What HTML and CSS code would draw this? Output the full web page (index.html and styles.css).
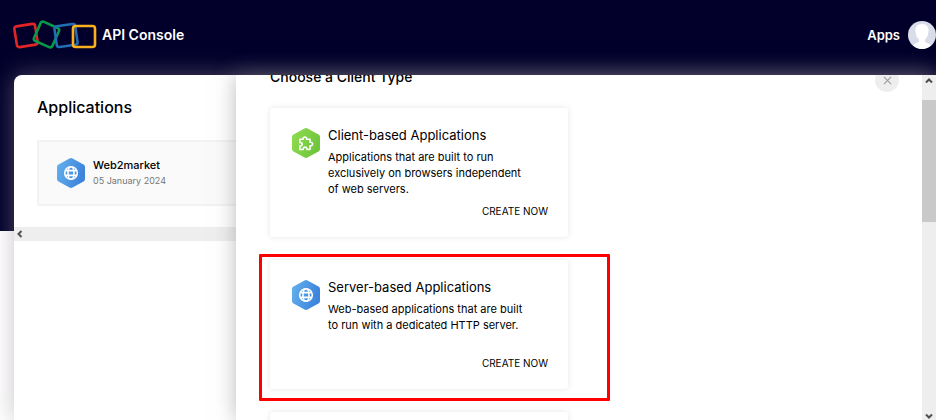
FILE: index.html
```html
<!DOCTYPE html>
<html lang="en">
<head>
  <meta charset="UTF-8">
  <meta name="viewport" content="width=device-width, initial-scale=1.0">
  <title>API Console</title>
  <link rel="stylesheet" href="styles.css">
</head>
<body>
  <svg class="icon-defs" aria-hidden="true">
    <defs>
      <linearGradient id="blueFill" x1="0" y1="0" x2="1" y2="0.3">
        <stop offset="0" stop-color="#64b2ec"/>
        <stop offset="1" stop-color="#3d84dc"/>
      </linearGradient>
      <linearGradient id="greenFill" x1="0" y1="0" x2="1" y2="0.4">
        <stop offset="0" stop-color="#92dc50"/>
        <stop offset="1" stop-color="#6fc63c"/>
      </linearGradient>
      <symbol id="globeIcon" viewBox="0 0 28 32">
        <path d="M12.5 1.4Q14 .6 15.5 1.4L26.5 7.4Q28 8.3 28 10V22Q28 23.7 26.5 24.6L15.5 30.6Q14 31.4 12.5 30.6L1.5 24.6Q0 23.7 0 22V10Q0 8.3 1.5 7.4Z" fill="url(#blueFill)"/>
        <g fill="none" stroke="#fff" stroke-width="1.6">
          <circle cx="14" cy="16" r="6.3"/>
          <ellipse cx="14" cy="16" rx="3" ry="6.3"/>
          <path d="M8.5 13.6H19.5M8.5 18.4H19.5"/>
        </g>
      </symbol>
      <symbol id="puzzleIcon" viewBox="0 0 28 32">
        <path d="M12.5 1.4Q14 .6 15.5 1.4L26.5 7.4Q28 8.3 28 10V22Q28 23.7 26.5 24.6L15.5 30.6Q14 31.4 12.5 30.6L1.5 24.6Q0 23.7 0 22V10Q0 8.3 1.5 7.4Z" fill="url(#greenFill)"/>
        <path d="M7.8 12.3H11.2C10.4 9.3 15.2 9.3 14.6 12.3H18V15.3C21.4 14.5 21.4 19.5 18 18.8V22.5H15C15.4 19.3 10.8 19.3 11.2 22.5H7.8V19C11 19.6 11 15 7.8 15.6Z" fill="none" stroke="#fff" stroke-width="1.6" stroke-linejoin="round"/>
      </symbol>
    </defs>
  </svg>

  <header class="header">
    <a href="#" class="brand">
      <svg class="logo" viewBox="0 0 84 30" fill="none" stroke-width="2.6" aria-hidden="true">
        <rect x="2.500" y="5" width="21" height="21" rx="2.500" stroke="#e42527" transform="rotate(-9 13 15.500)"/>
        <rect x="23.500" y="4" width="20" height="21" rx="2.500" stroke="#089949" transform="rotate(24 33.500 14.500)"/>
        <rect x="42.500" y="5" width="21" height="21" rx="2.500" stroke="#226db4" transform="rotate(-8 53 15.500)"/>
        <rect x="60" y="6" width="22" height="21" rx="2.500" stroke="#f9b21d"/>
      </svg>
      <span class="brand-name">API Console</span>
    </a>
    <nav class="header-nav">
      <a href="#" class="nav-link">Apps</a>
      <button type="button" class="avatar" aria-label="Profile">
        <svg viewBox="0 0 28 28" aria-hidden="true">
          <circle cx="14" cy="14" r="14" fill="#d9dde9"/>
          <path d="M14 3C9.3 3 7 6.3 7.5 10.5C7.8 14.5 9.3 17.3 11 18.5V20.5C9.5 22 7 22.3 5 24.2Q9 28 14 28T23 24.2C21 22.3 18.5 22 17 20.5V18.5C18.7 17.3 20.2 14.5 20.5 10.5C21 6.3 18.7 3 14 3Z" fill="#fff"/>
        </svg>
      </button>
    </nav>
  </header>

  <div class="workspace">
    <section class="app-list">
      <h1>Applications</h1>
      <a href="#" class="app-item">
        <svg class="hex-icon" aria-hidden="true"><use href="#globeIcon"/></svg>
        <span class="app-info">
          <span class="app-name">Web2market</span>
          <span class="app-date">05 January 2024</span>
        </span>
      </a>
      <div class="scrollbar-x">
        <svg class="arrow" viewBox="0 0 8 8" aria-hidden="true"><path d="M5.5 1L2.5 4L5.5 7"/></svg>
      </div>
    </section>

    <main class="panel">
      <div class="panel-body">
        <div class="client-types">
          <h2>Choose a Client Type</h2>

          <article class="card">
            <svg class="hex-icon" aria-hidden="true"><use href="#puzzleIcon"/></svg>
            <div class="card-body">
              <h3>Client-based Applications</h3>
              <p>Applications that are built to run exclusively on browsers independent of web servers.</p>
              <button type="button" class="btn-create">CREATE NOW</button>
            </div>
          </article>

          <article class="card card-marked">
            <svg class="hex-icon" aria-hidden="true"><use href="#globeIcon"/></svg>
            <div class="card-body">
              <h3>Server-based Applications</h3>
              <p>Web-based applications that are built to run with a dedicated HTTP server.</p>
              <button type="button" class="btn-create">CREATE NOW</button>
            </div>
          </article>

          <article class="card"></article>
        </div>
        <button type="button" class="btn-close" aria-label="Close">
          <svg viewBox="0 0 10 10" aria-hidden="true"><path d="M1 1L9 9M9 1L1 9"/></svg>
        </button>
      </div>
      <div class="scrollbar-y">
        <svg class="arrow" viewBox="0 0 8 8" aria-hidden="true"><path d="M1 5.5L4 2.5L7 5.5"/></svg>
        <div class="thumb"></div>
        <svg class="arrow arrow-down" viewBox="0 0 8 8" aria-hidden="true"><path d="M1 2.5L4 5.5L7 2.5"/></svg>
      </div>
    </main>
  </div>
</body>
</html>
```

FILE: styles.css
```css
* {
  margin: 0;
  padding: 0;
  box-sizing: border-box;
}

body {
  font-family: Inter, "Liberation Sans", sans-serif;
  font-size: 11px;
  color: #000;
  background: linear-gradient(#02002b 231px, #fff 231px);
  height: 100vh;
  display: flex;
  flex-direction: column;
  overflow: hidden;
}

a {
  color: inherit;
  text-decoration: none;
}

button {
  font: inherit;
  color: inherit;
  background: none;
  border: none;
  cursor: pointer;
}

.icon-defs {
  position: absolute;
  width: 0;
  height: 0;
}

.header {
  height: 75px;
  flex: none;
  display: flex;
  align-items: center;
  justify-content: space-between;
  padding: 0 0 6px 13px;
  color: #fff;
}

.brand {
  display: flex;
  align-items: center;
  gap: 5px;
}

.logo {
  width: 84px;
  height: 30px;
}

.brand-name {
  font-size: 14px;
  font-weight: 600;
}

.nav-link {
  font-size: 13px;
  font-weight: 600;
}

.header-nav {
  display: flex;
  align-items: center;
  gap: 8px;
}

.avatar,
.avatar svg {
  display: block;
  width: 28px;
  height: 28px;
}

.workspace {
  flex: 1;
  min-height: 0;
  display: grid;
  grid-template-columns: 222px 1fr;
  margin-left: 14px;
  background: #fff;
  border-radius: 8px 0 0 0;
  box-shadow: 0 0 24px rgba(150, 140, 150, 0.5);
}

.app-list {
  padding-top: 22px;
  overflow: hidden;
}

.app-list h1 {
  font-size: 16px;
  font-weight: 500;
  line-height: 20px;
  margin: 0 0 23px 23px;
}

.app-item {
  display: flex;
  align-items: center;
  gap: 8px;
  height: 66px;
  margin-left: 23px;
  padding-left: 18px;
  background: #fafafa;
  border: 2px solid #f2f2f2;
  border-right: none;
  border-radius: 2px 0 0 2px;
}

.hex-icon {
  width: 28px;
  height: 32px;
  flex: none;
}

.app-info {
  display: flex;
  flex-direction: column;
}

.app-name {
  font-weight: 500;
  line-height: 16px;
}

.app-date {
  font-size: 9px;
  line-height: 16px;
  color: #777;
}

.scrollbar-x {
  display: flex;
  align-items: center;
  height: 14px;
  margin-top: 21px;
  padding-left: 2px;
  background: #eee;
}

.arrow {
  width: 8px;
  height: 8px;
  fill: none;
  stroke: #505050;
  stroke-width: 2;
}

.panel {
  display: flex;
  min-width: 0;
  min-height: 0;
  background: #fff;
  box-shadow: 0 0 20px rgba(120, 120, 120, 0.5);
}

.panel-body {
  flex: 1;
  display: flex;
  align-items: flex-start;
  justify-content: space-between;
  padding: 0 23px 0 34px;
  overflow: hidden;
}

/* scrolled a little past the heading */
.client-types {
  width: 298px;
  margin-top: -8px;
}

.client-types h2 {
  font-size: 14px;
  font-weight: 500;
  line-height: 20px;
  margin-bottom: 21px;
}

.card {
  position: relative;
  display: flex;
  gap: 8px;
  height: 129px;
  margin-bottom: 23px;
  padding: 19px 20px 18px 22px;
  border-radius: 3px;
  box-shadow: 0 0 6px rgba(0, 0, 0, 0.1);
}

.card-body {
  flex: 1;
  display: flex;
  flex-direction: column;
}

.card h3 {
  font-size: 13px;
  font-weight: 400;
  line-height: 16px;
  margin-bottom: 6px;
}

.card p {
  line-height: 16px;
  max-width: 196px;
}

.btn-create {
  margin-top: auto;
  align-self: flex-end;
  font-size: 10px;
  line-height: 16px;
}

.card-marked::after {
  content: "";
  position: absolute;
  inset: -6px -42px -12px -11px;
  border: 3px solid #fe0000;
  border-radius: 1px;
  pointer-events: none;
}

.btn-close {
  display: flex;
  align-items: center;
  justify-content: center;
  width: 24px;
  height: 24px;
  margin-top: -7px;
  border-radius: 50%;
  background: #eee;
}

.btn-close svg {
  width: 9px;
  height: 9px;
  stroke: #999;
  stroke-width: 1.2;
}

.scrollbar-y {
  display: flex;
  flex-direction: column;
  align-items: center;
  width: 14px;
  padding-top: 2px;
  background: #eee;
}

.thumb {
  width: 100%;
  height: 122px;
  margin-top: 15px;
  background: #c9c9c9;
}

.arrow-down {
  margin-top: auto;
}
```
